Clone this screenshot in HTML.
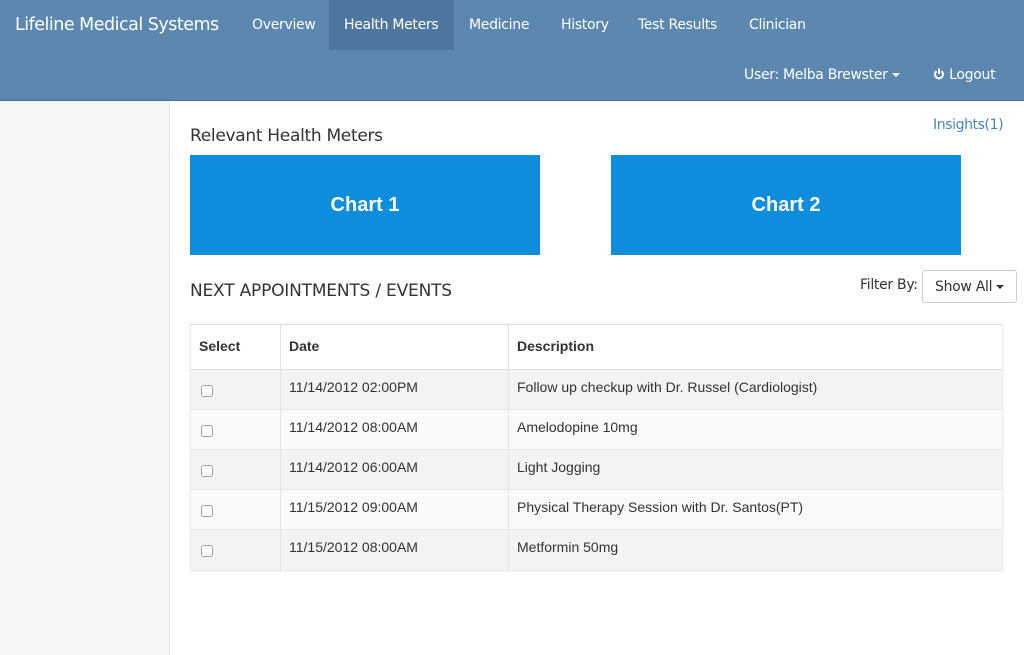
<!DOCTYPE html>
<html><head><meta charset="utf-8"><style>
*{margin:0;padding:0;box-sizing:border-box}
body{width:1024px;height:655px;overflow:hidden;background:#fff;font-family:"Liberation Sans",sans-serif;position:relative}
.nav{position:absolute;left:0;top:0;width:1024px;height:101px;background:#5c87ae;border-bottom:1px solid #4a6f93}
.nav span{position:absolute;color:#fff;font-family:"DejaVu Sans","Liberation Sans",sans-serif;font-size:14px;top:17px;letter-spacing:-0.3px}
.brand{font-size:17.5px!important;left:15px;top:15px!important;letter-spacing:-0.5px!important}
.active{position:absolute;left:329px;top:0;width:125px;height:50px;background:#4f769e}
.side{position:absolute;left:0;top:101px;width:170px;height:554px;background:#f5f5f5;border-right:1px solid #e6e6e6}
.t{position:absolute;font-family:"DejaVu Sans","Liberation Sans",sans-serif;color:#333}
.chart{position:absolute;top:155px;width:350px;height:100px;background:#0f8ddd;color:#fff;font-weight:bold;font-size:20px;text-align:center;line-height:100px}
table{position:absolute;left:190px;top:324px;width:813px;border-collapse:collapse;font-size:14px;color:#333;box-shadow:0 1px 2px rgba(0,0,0,.12)}
td,th{height:40px;border-left:1px solid #e3e3e3;border-top:1px solid #e8e8e8;text-align:left;vertical-align:top;padding:9px 8px 0}
th{height:45px;padding-top:13px;border-top:1px solid #ddd;border-bottom:1px solid #ddd}
tr td:first-child,tr th:first-child{border-left:1px solid #eee}
tr td:last-child,tr th:last-child{border-right:1px solid #eee}
tr:nth-child(even) td{background:#f3f3f3}
tr:nth-child(odd) td{background:#fafafa}
.cb{display:inline-block;width:12px;height:12px;border:1px solid #a0a0a0;border-radius:3px;background:#fff;margin:6px 0 0 2px}
</style></head><body>
<div class="nav">
<div class="active"></div>
<span class="brand">Lifeline Medical Systems</span>
<span style="left:252px">Overview</span>
<span style="left:344px">Health Meters</span>
<span style="left:469px">Medicine</span>
<span style="left:561px">History</span>
<span style="left:638px">Test Results</span>
<span style="left:749px">Clinician</span>
<span style="left:744px;top:67px">User: Melba Brewster <span style="position:static;display:inline-block;border-left:4px solid transparent;border-right:4px solid transparent;border-top:4px solid #fff;vertical-align:middle"></span></span>
<span style="left:933px;top:67px"><svg width="12" height="12" viewBox="0 0 12 12" style="vertical-align:-1px"><path d="M3.5 3.2A4 4 0 1 0 8.5 3.2" fill="none" stroke="#fff" stroke-width="2"/><path d="M6 0.5V6" stroke="#fff" stroke-width="2"/></svg> Logout</span>
</div>
<div class="side"></div>
<div class="t" style="left:190px;top:126px;font-size:17px;letter-spacing:-0.3px">Relevant Health Meters</div>
<div class="t" style="left:933px;top:117px;font-size:14px;color:#4a86c0;letter-spacing:-0.4px">Insights(1)</div>
<div class="chart" style="left:190px">Chart 1</div>
<div class="chart" style="left:611px">Chart 2</div>
<div class="t" style="left:190px;top:281px;font-size:17px;letter-spacing:-0.2px">NEXT APPOINTMENTS / EVENTS</div>
<div class="t" style="left:860px;top:277px;font-size:14px;letter-spacing:-0.3px">Filter By:</div>
<div class="t" style="left:922px;top:270px;width:95px;height:33px;border:1px solid #ccc;border-radius:3px;font-size:14px;padding:8px 0 0 12px;letter-spacing:-0.3px">Show All <span style="display:inline-block;border-left:4px solid transparent;border-right:4px solid transparent;border-top:4px solid #333;vertical-align:middle"></span></div>
<table>
<tr><th style="width:90px">Select</th><th style="width:228px">Date</th><th>Description</th></tr>
<tr><td><span class="cb"></span></td><td>11/14/2012 02:00PM</td><td>Follow up checkup with Dr. Russel (Cardiologist)</td></tr>
<tr><td><span class="cb"></span></td><td>11/14/2012 08:00AM</td><td>Amelodopine 10mg</td></tr>
<tr><td><span class="cb"></span></td><td>11/14/2012 06:00AM</td><td>Light Jogging</td></tr>
<tr><td><span class="cb"></span></td><td>11/15/2012 09:00AM</td><td>Physical Therapy Session with Dr. Santos(PT)</td></tr>
<tr><td><span class="cb"></span></td><td>11/15/2012 08:00AM</td><td>Metformin 50mg</td></tr>
</table>
</body></html>
